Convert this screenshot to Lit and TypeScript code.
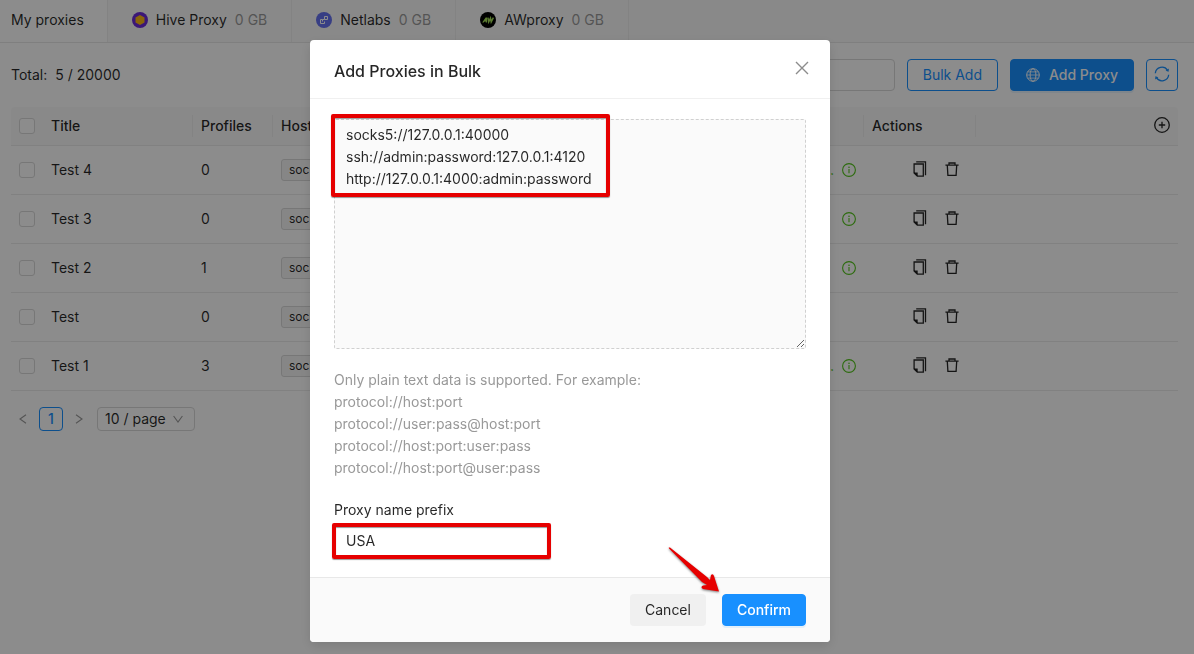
import { LitElement, html, css, svg, nothing } from "lit";
import { customElement, state } from "lit/decorators.js";

interface ProxyRow {
  title: string;
  profiles: number;
  status: string;
}

const rows: ProxyRow[] = [
  { title: "Test 4", profiles: 0, status: "Connected" },
  { title: "Test 3", profiles: 0, status: "" },
  { title: "Test 2", profiles: 1, status: "" },
  { title: "Test", profiles: 0, status: "none" },
  { title: "Test 1", profiles: 3, status: "Connected" },
];

const icon = (size: number, box: number, body: unknown) => html`
  <svg class="icon" width=${size} height=${size} viewBox="0 0 ${box} ${box}" fill="none"
    stroke="currentColor" aria-hidden="true">${body}</svg>`;

const hiveLogo = icon(16, 16, svg`
  <circle cx="8" cy="8" r="8" fill="#6c2bd9" stroke="none"/>
  <path d="M8 2.9l4.5 2.5v5.2L8 13.1l-4.5-2.500V5.400z" fill="#fdb913" stroke="none"/>`);

const netlabsLogo = icon(16, 16, svg`
  <circle cx="8" cy="8" r="8" fill="#6571f0" stroke="none"/>
  <path d="M8.500 4.500h3v3h-3zM6.500 7.500h-2v4h4v-2M6.500 9.500v-2h2" stroke="#fff" stroke-width="1"/>`);

const awLogo = icon(16, 16, svg`
  <circle cx="8" cy="8" r="8" fill="#000" stroke="none"/>
  <path d="M2.2 10.6L5.6 5.4h1.5v5.2H5.7V9.5H4.5l-.7 1.1z" fill="#a6e05a" stroke="none"/>
  <path d="M7.9 5.6l.8 4.3 1.8-3.8.7 3.8 2.2-4.3" stroke="#a6e05a" stroke-width="1.5"/>`);

const closeIcon = icon(14, 14, svg`<path d="M1 1l12 12M13 1L1 13" stroke-width="1.4"/>`);
const globeIcon = icon(14, 14, svg`
  <circle cx="7" cy="7" r="6.3"/><ellipse cx="7" cy="7" rx="2.9" ry="6.3"/>
  <path d="M.7 7h12.6M1.6 3.9h10.8M1.6 10.1h10.8" stroke-width=".8"/>`);
const syncIcon = icon(16, 16, svg`
  <path d="M1.3 7.2A6.7 6.7 0 0 1 13.6 4.3M14.7 8.8A6.7 6.7 0 0 1 2.4 11.7" stroke-width="1.3"/>
  <path d="M14.9 2.6l-.3 3.2-3-1zM1.1 13.4l.3-3.2 3 1z" fill="currentColor" stroke="none"/>`);
const plusIcon = icon(16, 16, svg`
  <circle cx="8" cy="8" r="7.3" stroke-width="1.3"/><path d="M8 4.8v6.4M4.8 8h6.4" stroke-width="1.3"/>`);
const infoIcon = icon(14, 14, svg`
  <circle cx="7" cy="7" r="6.4" stroke-width="1.1"/>
  <path d="M7 6v4.2" stroke-width="1.1"/><circle cx="7" cy="4.2" r=".8" fill="currentColor" stroke="none"/>`);
const copyIcon = icon(16, 16, svg`
  <path d="M4.2.8h9.3v13.4" stroke-width="1.3"/>
  <path d="M2.1 3h9.2v12.2H5.3L2.1 12z" stroke-width="1.3"/>
  <path d="M1.8 11.4h3.9v3.9z" fill="currentColor" stroke="none"/>`);
const trashIcon = icon(14, 14, svg`
  <path d="M.4 3.2h13.2M4 3V1h6v2M2.3 3.4l.6 9.9h8.2l.6-9.9" stroke-width="1.3"/>`);
const leftIcon = icon(10, 10, svg`<path d="M8 .8L2 5l6 4.2" stroke-width="1.1"/>`);
const rightIcon = icon(10, 10, svg`<path d="M2 .8L8 5 2 9.2" stroke-width="1.1"/>`);
const downIcon = icon(10, 10, svg`<path d="M.6 2L5 8l4.4-6" stroke-width="1.1"/>`);

const base = css`
  * { box-sizing: border-box; }
  button, input, textarea, select { font: inherit; color: inherit; margin: 0; }
  button { cursor: pointer; }
  .icon { display: block; flex: none; }
  .btn {
    display: inline-flex;
    align-items: center;
    justify-content: center;
    gap: 9px;
    height: 32px;
    padding: 0 15px;
    border: 1px solid transparent;
    border-radius: 4px;
    white-space: nowrap;
  }
  .primary {
    background: #1890ff;
    border-color: #1890ff;
    color: #fff;
    font-weight: 500;
    box-shadow: 0 2px 0 rgba(24, 144, 255, 0.1);
  }
  .outline { background: #fff; border-color: #1890ff; color: #1890ff; }
  .icon-only { width: 32px; padding: 0 0 2px; }
`;

@customElement("proxy-tabs")
class ProxyTabs extends LitElement {
  static styles = [base, css`
    :host { display: block; }
    .tabs { display: flex; background: #fafafa; border-bottom: 1px solid #e8e8e8; }
    .tab {
      display: flex;
      align-items: center;
      gap: 8px;
      height: 42px;
      padding: 0 24px 2px;
      border: 0;
      border-right: 1px solid #eee;
      background: none;
      white-space: nowrap;
    }
    .active { padding-left: 11px; padding-right: 23px; background: #fff; }
    .quota { color: #9a9a9a; }
  `];

  render() {
    const tabs = [
      { logo: hiveLogo, name: "Hive Proxy" },
      { logo: netlabsLogo, name: "Netlabs" },
      { logo: awLogo, name: "AWproxy" },
    ];
    return html`<nav class="tabs">
      <button class="tab active">My proxies</button>
      ${tabs.map((t) => html`<button class="tab">${t.logo}<span>${t.name}</span><span class="quota">0 GB</span></button>`)}
    </nav>`;
  }
}

@customElement("proxy-table")
class ProxyTable extends LitElement {
  static styles = [base, css`
    :host { display: block; }
    table { width: 100%; table-layout: fixed; border-collapse: separate; border-spacing: 0; }
    th, td { padding: 0 8px; text-align: left; font-weight: 400; border-bottom: 1px solid #ececec; }
    th { height: 39px; background: #fafafa; font-weight: 500; }
    th:first-child { border-top-left-radius: 4px; }
    th:last-child { border-top-right-radius: 4px; }
    td { height: 49px; }
    .split {
      background-image: linear-gradient(#eee, #eee);
      background-repeat: no-repeat;
      background-position: right center;
      background-size: 1px 22px;
    }
    .c-check { width: 32px; }
    .c-title { width: 150px; }
    .c-profiles { width: 80px; }
    .c-host { width: 400px; }
    .c-status { width: 191px; }
    .c-actions { width: 112px; }
    .c-more { width: 40px; }
    .check {
      display: block;
      appearance: none;
      width: 16px;
      height: 16px;
      margin: 0;
      border: 1px solid #d9d9d9;
      border-radius: 3px;
      background: #fff;
    }
    .tag {
      display: block;
      width: fit-content;
      padding: 0 7px;
      border: 1px solid #d9d9d9;
      border-radius: 3px;
      background: #f5f5f5;
      font-size: 12px;
      line-height: 20px;
    }
    .status { display: flex; align-items: center; justify-content: flex-end; gap: 8px; color: #52c41a; }
    .actions { display: flex; justify-content: flex-end; gap: 16px; padding-right: 8px; }
    .act { display: grid; place-items: center; width: 16px; height: 22px; padding: 0 0 2px; border: 0; background: none; }
    .more { margin-left: auto; }
  `];

  render() {
    return html`<table>
      <colgroup>
        <col class="c-check"><col class="c-title"><col class="c-profiles"><col class="c-host">
        <col class="c-status"><col class="c-actions"><col><col class="c-more">
      </colgroup>
      <thead><tr>
        <th><input class="check" type="checkbox" aria-label="Select all"></th>
        <th class="split">Title</th><th class="split">Profiles</th><th class="split">Host</th>
        <th class="split"></th><th class="split">Actions</th><th></th>
        <th><button class="act more" aria-label="Add column">${plusIcon}</button></th>
      </tr></thead>
      <tbody>
        ${rows.map((r) => html`<tr>
          <td><input class="check" type="checkbox" aria-label=${r.title}></td>
          <td>${r.title}</td>
          <td>${r.profiles}</td>
          <td><span class="tag">socks5</span></td>
          <td>${r.status === "none" ? nothing : html`<div class="status">${r.status ? html`<span>…</span>` : nothing}${infoIcon}</div>`}</td>
          <td><div class="actions">
            <button class="act" aria-label="Copy">${copyIcon}</button>
            <button class="act" aria-label="Delete">${trashIcon}</button>
          </div></td>
          <td></td><td></td>
        </tr>`)}
      </tbody>
    </table>`;
  }
}

@customElement("bulk-dialog")
class BulkDialog extends LitElement {
  static styles = [base, css`
    :host { display: block; width: 100%; max-width: 520px; }
    .dialog { background: #fff; border-radius: 4px; box-shadow: 0 4px 12px rgba(0, 0, 0, 0.12); }
    .head {
      display: flex;
      align-items: center;
      justify-content: space-between;
      padding: 18px 21px 18px 24px;
      border-bottom: 1px solid #f0f0f0;
    }
    .title { margin: 0; padding-top: 4px; font-size: 16px; line-height: 18px; font-weight: 500; }
    .close { display: grid; padding: 0 0 3px; border: 0; background: none; color: #8c8c8c; }
    .body { display: flex; flex-direction: column; gap: 20px; padding: 20px 24px; }
    .marked { position: relative; display: grid; }
    .list {
      width: 100%;
      height: 230px;
      padding: 4px 11px;
      border: 1px dashed #d0d0d0;
      border-radius: 2px;
      background: #fafafa;
      outline: 0;
      resize: vertical;
    }
    .hint { margin: 0; color: #999; }
    .field { display: grid; gap: 4px; }
    .prefix { width: 215px; }
    .prefix-input {
      width: 100%;
      height: 32px;
      padding: 0 11px 2px;
      border: 1px solid #d9d9d9;
      border-radius: 2px;
      outline: 0;
    }
    .mark {
      position: absolute;
      border: 4px solid #e60000;
      border-radius: 2px;
      box-shadow: 0 1px 1px rgba(0, 0, 0, 0.4), inset 0 1px 1px rgba(0, 0, 0, 0.4);
      pointer-events: none;
    }
    .mark-list { top: -5px; left: -3px; width: 279px; height: 83px; }
    .mark-prefix { inset: -2px; }
    .foot {
      position: relative;
      display: flex;
      justify-content: flex-end;
      gap: 16px;
      padding: 16px 24px;
      border-top: 1px solid #e8e8e8;
      border-radius: 0 0 4px 4px;
      background: #fafafa;
    }
    .foot .btn { padding: 0 14px; }
    .cancel { background: #f0f0f0; }
    .arrow { position: absolute; right: 109px; bottom: 48px; pointer-events: none; filter: drop-shadow(0 1px 1px rgba(0, 0, 0, 0.5)); }
  `];

  @state() private list = "socks5://127.0.0.1:40000\nssh://admin:password:127.0.0.1:4120\nhttp://127.0.0.1:4000:admin:password";
  @state() private prefix = "USA";

  render() {
    return html`<section class="dialog" role="dialog" aria-labelledby="title">
      <header class="head">
        <h2 class="title" id="title">Add Proxies in Bulk</h2>
        <button class="close" aria-label="Close">${closeIcon}</button>
      </header>
      <div class="body">
        <div class="marked">
          <textarea class="list" aria-label="Proxy list" spellcheck="false" .value=${this.list}></textarea>
          <span class="mark mark-list"></span>
        </div>
        <p class="hint">
          Only plain text data is supported. For example:<br>
          protocol://host:port<br>
          protocol://user:pass@host:port<br>
          protocol://host:port:user:pass<br>
          protocol://host:port@user:pass
        </p>
        <div class="field">
          <label for="prefix">Proxy name prefix</label>
          <div class="marked prefix">
            <input class="prefix-input" id="prefix" type="text" .value=${this.prefix}>
            <span class="mark mark-prefix"></span>
          </div>
        </div>
      </div>
      <footer class="foot">
        <button class="btn cancel">Cancel</button>
        <button class="btn primary">Confirm</button>
        <svg class="arrow" width="56" height="52" viewBox="0 0 56 52" aria-hidden="true">
          <path d="M4 6.5Q3 5 5 5.6L42 35L45 38L46 33Q48 31 49 34L54 49.5L38 47Q35 45 38 43.500L42 43L37 40Z" fill="#e60000"/>
        </svg>
      </footer>
    </section>`;
  }
}

@customElement("app-root")
class AppRoot extends LitElement {
  static styles = [base, css`
    :host {
      display: block;
      min-height: 100vh;
      background: #fff;
      color: rgba(0, 0, 0, 0.85);
      font: 14px/22px Inter, "Liberation Sans", sans-serif;
    }
    .page { display: flex; flex-direction: column; gap: 16px; padding: 16px 16px 16px 11px; }
    .toolbar { display: flex; align-items: center; gap: 12px; }
    .total { display: flex; gap: 8px; margin-right: auto; }
    .search { width: 240px; height: 32px; padding: 0 11px; border: 1px solid #d9d9d9; border-radius: 4px; background: #fff; }
    .pager { display: flex; align-items: center; }
    .step { display: grid; place-items: center; width: 24px; height: 24px; padding: 0; border: 0; background: none; color: #9a9a9a; }
    .current {
      width: 24px;
      height: 24px;
      margin: 0 4px;
      padding: 0;
      border: 1px solid #1890ff;
      border-radius: 4px;
      background: #fff;
      color: #1890ff;
      font-weight: 500;
    }
    .size { display: grid; align-items: center; margin-left: 6px; }
    .size-select {
      grid-area: 1 / 1;
      appearance: none;
      width: 98px;
      height: 24px;
      padding: 0 7px;
      border: 1px solid #d9d9d9;
      border-radius: 4px;
      background: #fff;
    }
    .size-arrow { grid-area: 1 / 1; justify-self: end; padding-right: 12px; color: #9a9a9a; pointer-events: none; }
    .mask {
      position: fixed;
      inset: 0;
      display: flex;
      justify-content: center;
      align-items: flex-start;
      padding: 40px 54px 0 0;
      overflow: auto;
      background: rgba(0, 0, 0, 0.45);
    }
  `];

  render() {
    return html`
      <proxy-tabs></proxy-tabs>
      <main class="page">
        <div class="toolbar">
          <div class="total"><span>Total:</span><span>5 / 20000</span></div>
          <input class="search" type="search" aria-label="Search">
          <button class="btn outline">Bulk Add</button>
          <button class="btn primary">${globeIcon}<span>Add Proxy</span></button>
          <button class="btn outline icon-only" aria-label="Refresh">${syncIcon}</button>
        </div>
        <proxy-table></proxy-table>
        <nav class="pager" aria-label="Pagination">
          <button class="step" aria-label="Previous page">${leftIcon}</button>
          <button class="current">1</button>
          <button class="step" aria-label="Next page">${rightIcon}</button>
          <div class="size">
            <select class="size-select" aria-label="Page size"><option>10 / page</option></select>
            <span class="size-arrow">${downIcon}</span>
          </div>
        </nav>
      </main>
      <div class="mask"><bulk-dialog></bulk-dialog></div>`;
  }
}
